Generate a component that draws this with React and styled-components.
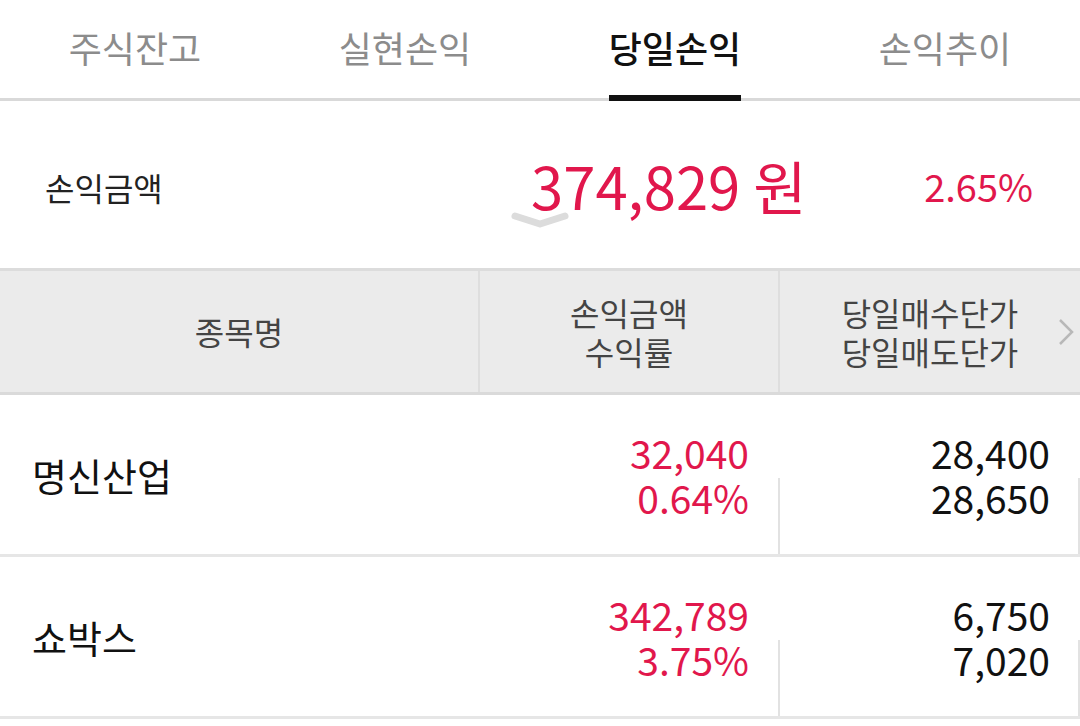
import React, { useState } from 'react';
import styled, { createGlobalStyle, css } from 'styled-components';

const RED = '#e1174c';

const GlobalStyle = createGlobalStyle`
  html, body {
    margin: 0;
    padding: 0;
    background: #fff;
  }
  body {
    font-family: 'Noto Sans CJK KR', 'Noto Sans', sans-serif;
    color: #111;
  }
`;

const Page = styled.div`
  width: 1080px;
  background: #fff;
`;

const TabBar = styled.div`
  display: grid;
  grid-template-columns: repeat(4, 1fr);
  height: 98px;
  border-bottom: 3px solid #d9d9d9;
`;

const Tab = styled.div`
  display: flex;
  justify-content: center;
`;

const TabLabel = styled.span`
  position: relative;
  display: inline-flex;
  align-items: center;
  padding-bottom: 4px;
  font-size: 36px;
  color: #8c8c8c;
  cursor: pointer;

  ${(p) =>
    p.active &&
    css`
      color: #111;
      font-weight: 500;
      &::after {
        content: '';
        position: absolute;
        left: 0;
        right: 0;
        bottom: -3px;
        height: 6px;
        background: #111;
      }
    `}
`;

const Summary = styled.div`
  display: grid;
  grid-template-columns: 486px auto 1fr;
  align-items: center;
  height: 167px;
  padding: 0 47px 0 45px;
  border-bottom: 3px solid #dcdcdc;
`;

const SummaryLabel = styled.div`
  font-size: 32px;
  color: #222;
  padding-top: 4px;
`;

const AmountWrap = styled.div`
  position: relative;
`;

const Amount = styled.div`
  font-size: 58px;
  color: ${RED};
  line-height: 1;
`;

const Chevron = styled.svg`
  position: absolute;
  left: -22px;
  top: 54px;
`;

const Rate = styled.div`
  justify-self: end;
  font-size: 38px;
  color: ${RED};
  padding-top: 2px;
`;

const columns = css`
  display: grid;
  grid-template-columns: 478px 300px 1fr;
`;

const HeadRow = styled.div`
  ${columns};
  height: 121px;
  background: #ebebeb;
  border-bottom: 3px solid #dadada;
`;

const HeadCell = styled.div`
  position: relative;
  display: flex;
  flex-direction: column;
  align-items: center;
  justify-content: center;
  font-size: 32px;
  line-height: 39px;
  color: #444;
  ${(p) => p.divided && 'border-left: 2px solid #dedede;'}
`;

const MoreArrow = styled.svg`
  position: absolute;
  right: 6px;
  top: 47px;
`;

const Row = styled.div`
  ${columns};
  height: 159px;
  border-bottom: 3px solid #e6e6e6;
`;

const NameCell = styled.div`
  display: flex;
  align-items: center;
  padding-left: 32px;
  font-size: 38px;
  color: #111;
`;

const ValueCell = styled.div`
  position: relative;
  display: flex;
  flex-direction: column;
  justify-content: center;
  align-items: flex-end;
  padding-right: ${(p) => p.pr}px;
  font-size: 39px;
  line-height: 45px;
  color: ${(p) => (p.red ? RED : '#111')};

  ${(p) =>
    p.divided &&
    css`
      &::before,
      &::after {
        content: '';
        position: absolute;
        top: 52%;
        bottom: 0;
        width: 2px;
        background: #e2e2e2;
      }
      &::before {
        left: 0;
      }
      &::after {
        right: 0;
      }
    `}
`;

const tabs = ['주식잔고', '실현손익', '당일손익', '손익추이'];

const stocks = [
  { name: '명신산업', profit: '32,040', rate: '0.64%', buy: '28,400', sell: '28,650' },
  { name: '쇼박스', profit: '342,789', rate: '3.75%', buy: '6,750', sell: '7,020' },
];

const App = () => {
  const [current, setCurrent] = useState(2);

  return (
    <Page>
      <GlobalStyle />
      <TabBar>
        {tabs.map((t, i) => (
          <Tab key={t}>
            <TabLabel active={i === current} onClick={() => setCurrent(i)}>
              {t}
            </TabLabel>
          </Tab>
        ))}
      </TabBar>

      <Summary>
        <SummaryLabel>손익금액</SummaryLabel>
        <AmountWrap>
          <Amount>374,829 원</Amount>
          <Chevron width="62" height="20" viewBox="0 0 62 20">
            <path
              d="M6 6 L31 14 L56 6"
              fill="none"
              stroke="#dcdcdc"
              strokeWidth="7"
              strokeLinecap="round"
              strokeLinejoin="round"
            />
          </Chevron>
        </AmountWrap>
        <Rate>2.65%</Rate>
      </Summary>

      <HeadRow>
        <HeadCell>종목명</HeadCell>
        <HeadCell divided>
          <span>손익금액</span>
          <span>수익률</span>
        </HeadCell>
        <HeadCell divided>
          <span>당일매수단가</span>
          <span>당일매도단가</span>
          <MoreArrow width="16" height="28" viewBox="0 0 16 28">
            <path d="M2 2 L14 14 L2 26" fill="none" stroke="#b8b8b8" strokeWidth="2.5" />
          </MoreArrow>
        </HeadCell>
      </HeadRow>

      {stocks.map((s) => (
        <Row key={s.name}>
          <NameCell>{s.name}</NameCell>
          <ValueCell red pr={29}>
            <span>{s.profit}</span>
            <span>{s.rate}</span>
          </ValueCell>
          <ValueCell divided pr={30}>
            <span>{s.buy}</span>
            <span>{s.sell}</span>
          </ValueCell>
        </Row>
      ))}
    </Page>
  );
};

export default App;
